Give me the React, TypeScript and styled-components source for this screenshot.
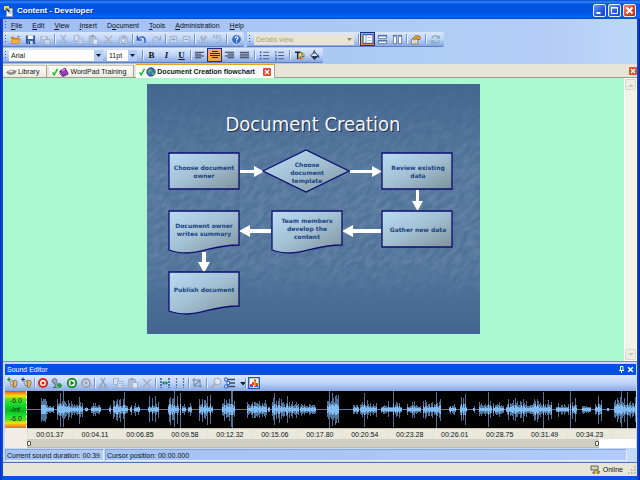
import React from "react";
import styled, { createGlobalStyle, css } from "styled-components";

const GlobalStyle = createGlobalStyle`
  * { box-sizing: border-box; }
  html, body { margin: 0; padding: 0; }
  body { font-family: "Liberation Sans", Arial, sans-serif; font-size: 7px; line-height: 10px; color: #0c1420; }
  button, select, input { font: inherit; color: inherit; margin: 0; padding: 0; }
  svg { display: block; flex: none; }
`;

/* ---------- window frame ---------- */

const Window = styled.div`
  display: flex;
  flex-direction: column;
  min-height: 100vh;
  padding: 0 3px 4px;
  background: linear-gradient(to right, #0a2fc0 0, #0b52e0 3px, #0b52e0 calc(100% - 3px), #0a1fa4 100%);
`;

const TitleBar = styled.header`
  display: flex;
  align-items: center;
  gap: 3px;
  height: 19px;
  margin: 0 -3px;
  padding: 2px 4px 0 3px;
  background: linear-gradient(#0a48c8 0, #2f86fa 2px, #0554e4 4px, #0055e2 12px, #0663fb 17px, #0348c8 19px);
`;

const TitleText = styled.h1`
  flex: 1;
  margin: 0;
  font-size: 8px;
  line-height: 12px;
  font-weight: bold;
  color: #fff;
  text-shadow: 1px 1px #0a2f90;
`;

const WindowButton = styled.button<{ $danger?: boolean }>`
  display: grid;
  place-items: center;
  width: 13px;
  height: 13px;
  margin-left: -1px;
  border: 1px solid #e4ecfd;
  border-radius: 2px;
  background: ${(p) =>
    p.$danger ? "linear-gradient(135deg, #f09078, #d8401c 60%, #c03010)" : "linear-gradient(135deg, #6f9cf8, #2258e0 60%, #1b48c8)"};
`;

const BarArea = styled.div`
  background: linear-gradient(to right, #9fbdf2, #b0cdf6 70%, #b5ccf7 86%, #bed8f8);
`;

const MenuBar = styled.nav`
  display: flex;
  align-items: center;
  height: 13px;
`;

const MenuItem = styled.button`
  height: 13px;
  margin-right: 4px;
  padding: 0 3px;
  border: 0;
  background: transparent;
`;

const ToolRow = styled.div`
  display: flex;
  gap: 3px;
  padding-bottom: 1px;
`;

const barFill = css`
  background: linear-gradient(#dbe8fd, #bfd4f8 50%, #86a8e2);
`;

const Toolbar = styled.div<{ $wide?: boolean }>`
  display: flex;
  align-items: center;
  height: ${(p) => (p.$wide ? 16 : 15)}px;
  padding-right: 1px;
  border-bottom: 1px solid #5f7fc0;
  border-radius: 0 2px 2px 0;
  ${barFill}
  ${(p) => p.$wide && css`border-radius: 0; border-bottom: 0;`}
`;

const Grip = styled.span`
  flex: none;
  width: 1px;
  height: 9px;
  margin: 0 2px;
  background: repeating-linear-gradient(#3a5590 0 1px, transparent 1px 3px);
`;

const Sep = styled.span<{ $gap?: number }>`
  flex: none;
  width: 1px;
  height: 10px;
  margin: 0 ${(p) => p.$gap ?? 1}px;
  background: #7594cf;
  box-shadow: 1px 0 #e8f0fd;
`;

const ToolButton = styled.button<{ $on?: boolean; $w?: number }>`
  display: grid;
  place-items: center;
  flex: none;
  width: ${(p) => p.$w ?? 15}px;
  height: 14px;
  border: ${(p) => (p.$on ? "1px solid #1b2f7c" : "0")};
  background: ${(p) => (p.$on ? "linear-gradient(#f8a860, #f4a04c)" : "transparent")};
  font-family: "Liberation Serif", serif;
  font-size: 9px;
  font-weight: bold;
`;

const SelectBox = styled.label<{ $w: number; $muted?: boolean; $m?: string }>`
  display: block;
  position: relative;
  width: ${(p) => p.$w}px;
  height: 11px;
  margin: ${(p) => p.$m ?? "0 4px 0 1px"};
  background: ${(p) => (p.$muted ? "#e6e4d4" : "#fff")};
  color: ${(p) => (p.$muted ? "#a8a692" : "#101010")};
  svg { position: absolute; right: 0; top: 0; pointer-events: none; }
`;

const Select = styled.select`
  appearance: none;
  display: block;
  width: 100%;
  height: 11px;
  padding: 0 2px;
  border: 0;
  background: transparent;
  line-height: 11px;
`;

/* ---------- tabs and document ---------- */

const TabStrip = styled.div`
  display: flex;
  align-items: flex-end;
  gap: 2px;
  height: 14px;
  background: #e7e6d6;
  border-bottom: 1px solid #9c9c8c;
`;

const Tab = styled.button<{ $active?: boolean }>`
  display: flex;
  align-items: center;
  gap: 1px;
  height: ${(p) => (p.$active ? 14 : 12)}px;
  margin-bottom: ${(p) => (p.$active ? -1 : 0)}px;
  padding: 0 ${(p) => (p.$active ? 3 : 7)}px 0 3px;
  border: 1px solid #a4a494;
  border-width: 1px 1px 0 0;
  border-top-color: ${(p) => (p.$active ? "#f0a020" : "#c8c8b8")};
  background: ${(p) => (p.$active ? "#fff" : "linear-gradient(#fdfdfa, #ecebdf)")};
  font-weight: ${(p) => (p.$active ? "bold" : "normal")};
  line-height: 10px;
`;

const CloseBox = styled.span`
  display: grid;
  place-items: center;
  width: 8px;
  height: 8px;
  margin-left: 7px;
  border: 0;
  border-radius: 1px;
  background: #e0502c;
`;

const StripClose = styled(CloseBox).attrs({ as: "button" })`
  align-self: center;
  margin-left: auto;
`;

const Workspace = styled.main`
  flex: 1;
  display: flex;
  border-bottom: 1px solid #8c8c80;
  background: #a9f8d0;
`;

const Canvas = styled.section`
  flex: 1;
  display: flex;
  justify-content: center;
  padding: 6px 0;
`;

const SlideArt = styled.svg`
  width: 333px;
  height: 250px;
  font-weight: bold;
  text-anchor: middle;
  fill: #1b4580;
`;

const ScrollTrack = styled.div`
  display: flex;
  flex-direction: column;
  justify-content: space-between;
  width: 13px;
  border: 1px solid #fff;
  background: #f3f2ea;
`;

const ScrollButton = styled.button`
  display: grid;
  place-items: center;
  height: 11px;
  border: 1px solid #d8d7ca;
  border-radius: 2px;
  background: #efeee4;
`;

/* ---------- sound editor ---------- */

const Panel = styled.section`
  padding: 2px 1px 1px 2px;
  background: #c5dafa;
  border-bottom: 1px solid #4f74b8;
`;

const PanelTitle = styled.h2`
  display: flex;
  align-items: center;
  height: 11px;
  margin: 0;
  padding: 0 1px 0 2px;
  background: #0650e0;
  color: #fff;
  font-size: 7px;
  font-weight: normal;
  span { flex: 1; }
`;

const PanelButton = styled.button`
  display: grid;
  place-items: center;
  width: 9px;
  height: 9px;
  border: 0;
  background: transparent;
`;

const Track = styled.div`
  display: flex;
  height: 37px;
  background: #000;
`;

const Meter = styled.div`
  flex: none;
  display: flex;
  flex-direction: column;
  justify-content: center;
  width: 22px;
  padding-right: 4px;
  border-right: 1px dashed #f4f4f4;
  text-align: right;
  line-height: 9px;
  color: #12300c;
  background: linear-gradient(#e83c10 0, #f09018 2px, #f8e010 5px, #60e020 8px, #20e030 12px, #08bc20 19px, #20e030 25px, #60e020 29px, #f8e010 32px, #f09018 35px, #e86850 37px);
`;

const WaveSvg = styled.svg`
  flex: 1;
  min-width: 0;
  height: 37px;
`;

const Ruler = styled.div`
  display: flex;
  height: 11px;
  padding-left: 22px;
  background: linear-gradient(to right, #f3ebe6 22px, #e9e8da 22px);
  text-align: center;
`;

const Tick = styled.span<{ $share: number }>`
  flex: ${(p) => p.$share} 1 0;
  border-top: 1px solid #c8c6b8;
  border-left: 1px solid #e4e2d6;
  line-height: 11px;
`;

const RangeRow = styled.div`
  display: flex;
  height: 9px;
  padding-left: 22px;
  background: linear-gradient(to right, #f3ebe6 22px, #fff 22px);
`;

const RangeTrack = styled.div`
  flex: 572 1 0;
  display: grid;
  background: #d0cec4;
  border-bottom: 1px solid #bab8ae;
`;

const RangeRest = styled.div`
  flex: 37 1 0;
`;

const Range = styled.input`
  grid-area: 1 / 1;
  appearance: none;
  width: 100%;
  height: 8px;
  background: transparent;
  pointer-events: none;
  &::-webkit-slider-thumb {
    appearance: none;
    pointer-events: auto;
    width: 4px;
    height: 5px;
    border: 1px solid #55534c;
    border-radius: 1px;
    background: #f4f3ec;
  }
`;

const SoundStatus = styled.div`
  display: flex;
  gap: 1px;
  height: 13px;
  padding: 1px 9px 0 0;
`;

const StatusCell = styled.div<{ $grow?: boolean }>`
  flex: ${(p) => (p.$grow ? "1" : "none")};
  padding: 0 3px 0 1px;
  border: 1px solid #8aa4d0;
  border-right-color: #e6effc;
  border-bottom-color: #e6effc;
  background: linear-gradient(to right, #a4c2f2, #b2cbf7);
  line-height: 11px;
`;

const StatusBar = styled.footer`
  display: flex;
  align-items: center;
  justify-content: flex-end;
  gap: 2px;
  height: 13px;
  background: #e7e6d6;
`;

/* ---------- icons ---------- */

const off = "#9fb0cc";
const glyphs: Record<string, React.ReactNode> = {
  open: <><path d="M1 3h3l1 1h5v2H1z" fill="#c8861c" /><path d="M1 10V4l1 2h9l-2 4.500z" fill="#fbc050" /><path d="M1 10.500h8l2.500-5h-8z" fill="#f7ae3c" stroke="#b8761c" strokeWidth=".6" /><path d="M8 3.500q1-2 2.500-.5" stroke="#356" fill="none" /></>,
  save: <><path d="M1 1.500h10v9.500H2l-1-1z" fill="#35589e" /><path d="M3 1.500h6v4H3z" fill="#f1f5fc" /><path d="M3.500 7.500h5V11h-5z" fill="#c9d6ee" /><path d="M4 8h1.500v3H4z" fill="#1c3268" /></>,
  saveAll: <><path d="M1 3h7v6H1z" fill="#b6c5de" stroke={off} /><path d="M3 3h3v2H3z" fill="#e2eafa" /><path d="M5 6h6v5H5z" fill="#c7d4ea" stroke={off} /></>,
  cut: <><path d="M3 1l5 7M8.500 1L4 8" stroke={off} strokeWidth="1.300" /><circle cx="3" cy="9.500" r="1.500" fill="none" stroke={off} /><circle cx="8" cy="9.500" r="1.500" fill="none" stroke={off} /></>,
  copy: <><path d="M1.500 1.500h5v6h-5z" fill="#d4e0f2" stroke={off} /><path d="M5.500 4.500h5v6h-5z" fill="#dde7f6" stroke={off} /><path d="M6.500 6.500h3M6.500 8.500h3" stroke={off} /></>,
  paste: <><path d="M1.500 2.500h7v8h-7z" fill="#b3bfd0" stroke={off} /><path d="M3.500 1h3v2h-3z" fill="#8b9cb8" /><path d="M5.500 5.500h5v5.500h-5z" fill="#e1e9f6" stroke={off} /></>,
  del: <path d="M2 2l8 8M10 2l-8 8" stroke="#a9a9b4" strokeWidth="1.300" />,
  photo: <><path d="M1.500 3.500h9v7h-9z" fill="#c2cee2" stroke={off} /><circle cx="6" cy="7" r="2.300" fill="#dbe5f4" stroke="#8d9fbe" /><path d="M4 1.500h5v2H4z" fill={off} /></>,
  undo: <path d="M1.500 2v4.500H6M2 6q3-4 6-2.500t1.500 6" fill="none" stroke="#2c5cb8" strokeWidth="1.500" />,
  redo: <path d="M10.500 2v4.500H6M10 6Q7 2 4 3.500t-1.500 6" fill="none" stroke={off} strokeWidth="1.300" />,
  plus: <><path d="M2.500 2.500h7v7h-7z" fill="#c8d8f3" stroke={off} /><path d="M4 6h4M6 4v4" stroke="#869cc0" /></>,
  minus: <><path d="M2.500 2.500h7v7h-7z" fill="#c8d8f3" stroke={off} /><path d="M4 6h4" stroke="#869cc0" /></>,
  find: <><path d="M3 2h2v3h2V2h2l2 8H7V7H5v3H1z" fill={off} /><path d="M3 5v4M9 5v4" stroke="#d8e3f5" /></>,
  spell: <><path d="M1 5l1.300-4L3.500 5M5 1v4h1.500V1zM10.500 1.500H8.500v3h2" fill="none" stroke={off} /><path d="M3.500 8l2 2.500L10 5.500" fill="none" stroke={off} strokeWidth="1.500" /></>,
  help: <><circle cx="6" cy="6" r="5.200" fill="#3568c4" stroke="#dfe9fb" strokeWidth=".8" /><path d="M4.500 4.700q.2-1.700 1.700-1.700 1.700.2 1.300 1.700L6.200 6.100v1M6.200 8.200v1.300" stroke="#fff" strokeWidth="1.200" fill="none" /></>,
  viewA: <><path d="M1 1.500h10v9H1z" fill="#fff" stroke="#4066a8" strokeWidth="1.300" /><path d="M4 2v8" stroke="#789acc" /><path d="M5.500 4.500h4M5.500 7.500h4" stroke="#a8c0e4" /></>,
  viewB: <><path d="M1.500 1.500h9v3.500h-9zM1.500 7h9v3.500h-9z" fill="#fbfcff" stroke="#66799e" /><path d="M1 2h10M1 7.500h10" stroke="#4a6ba4" strokeWidth="1.300" /></>,
  viewC: <><path d="M1.500 1.500H5v9H1.500zM7 1.500h3.500v9H7z" fill="#fbfcff" stroke="#66799e" /><path d="M1 2h4.500M6.500 2H11" stroke="#4a6ba4" strokeWidth="1.300" /></>,
  props: <><path d="M1.500 5.500h7V11h-7z" fill="#f5f4ea" stroke="#7d7868" /><path d="M3 5l3-3.500 5 1V6H8L7 4 5 6z" fill="#e9a72e" stroke="#6c5428" strokeWidth=".7" /><path d="M3 7.500h4M3 9.500h4" stroke="#9d9a88" strokeWidth=".7" /></>,
  refresh: <path d="M2 5q1-3.500 4.500-3T9.500 4.500M10 1.500v3H7M10 7q-1 3.500-4.500 3T2.500 7.500M2 10.500v-3h3" fill="none" stroke="#86b0b0" strokeWidth="1.400" />,
  left: <path d="M1 2.500h10M1 4.500h7M1 6.500h10M1 8.500h7" stroke="#222a3c" />,
  center: <path d="M3 2.500h6M1 4.500h10M1 6.500h10M3 8.500h6" stroke="#3a281c" />,
  right: <path d="M1 2.500h10M4 4.500h7M1 6.500h10M4 8.500h7" stroke="#222a3c" />,
  justify: <path d="M1 2.500h10M1 4.500h10M1 6.500h10M1 8.500h10" stroke="#222a3c" />,
  bullets: <><path d="M4.500 2.500H11M4.500 6H11M4.500 9.500H11" stroke="#4b5872" /><path d="M1 1.700h1.600v1.600H1zM1 5.200h1.600v1.600H1zM1 8.700h1.600v1.600H1z" fill="#23478e" /></>,
  numbers: <><path d="M4.500 2.500H11M4.500 6H11M4.500 9.500H11" stroke="#4b5872" /><path d="M2 1v3M1 5.500h1.500V7M1 8.500h1.500v2.500H1" fill="none" stroke="#23478e" strokeWidth=".8" /></>,
  palette: <><circle cx="7.500" cy="6.500" r="4" fill="#f0d47c" stroke="#8c7430" strokeWidth=".6" /><path d="M1 2.500h6M4 2.500V10" stroke="#1c2438" strokeWidth="1.500" /><circle cx="7" cy="8.500" r="1.300" fill="#d3342c" /><circle cx="9.500" cy="7" r="1.200" fill="#2f60d0" /><circle cx="8.500" cy="4.200" r="1.200" fill="#32a83c" /></>,
  bucket: <><path d="M2 6l4-4 4 4.500L6 10.500z" fill="#d9dde6" stroke="#1c2438" /><path d="M3 6.500h6.500L6 10z" fill="#20304f" /><path d="M5.500 4V.8h1" stroke="#1c2438" fill="none" /><path d="M9 5q3 1 2 4.500L9.500 7z" fill="#2048a8" /></>,
  earPlus: <><path d="M1 2.500h4M3 .5v4" stroke="#138420" strokeWidth="1.200" /><path d="M4 6q1-3 3-2.500v6Q5 9 4 6z" fill="#e8d8b0" stroke="#746440" strokeWidth=".7" /><path d="M8 3.500q3.500-1 3 2.500T8.500 11L7.500 9z" fill="#ecbf70" stroke="#7c6030" strokeWidth=".8" /></>,
  earBlue: <><path d="M1 2.500h4M3 .5v4" stroke="#1538a8" strokeWidth="1.200" /><path d="M4 6q1-3 3-2.500v6Q5 9 4 6z" fill="#e8d8b0" stroke="#746440" strokeWidth=".7" /><path d="M8 3.500q3.500-1 3 2.500T8.500 11L7.500 9z" fill="#ecbf70" stroke="#7c6030" strokeWidth=".8" /></>,
  record: <><circle cx="6" cy="6" r="4" fill="#fff" stroke="#e02818" strokeWidth="2.200" /><circle cx="6" cy="6" r="1.500" fill="#d82010" /></>,
  mic: <><path d="M1 4a2.500 2.500 0 1 1 4.500 1.500l2 2-1.500 1L4 6.500A2.500 2.500 0 0 1 1 4z" fill="#9aa4b4" stroke="#4e5a70" strokeWidth=".7" /><path d="M2 10.500h4M4 7v3" stroke="#4e5a70" /><path d="M6 8.500h5M8.500 6v5" stroke="#1b9a28" strokeWidth="2" /></>,
  play: <><circle cx="6" cy="6" r="4.200" fill="#fff" stroke="#189426" strokeWidth="2" /><path d="M4.500 3.500L8.500 6l-4 2.500z" fill="#107c1c" /></>,
  stop: <><circle cx="6" cy="6" r="4" fill="#d6dde8" stroke="#9aa3b2" strokeWidth="2" /><path d="M4.500 4.500h3v3h-3z" fill="#9aa3b2" /></>,
  cutG: <><path d="M4 1l4 7M8 1L4 8" stroke="#8f99a8" strokeWidth="1.200" /><circle cx="3.500" cy="9.500" r="1.400" fill="none" stroke="#8f99a8" /><circle cx="8.500" cy="9.500" r="1.400" fill="none" stroke="#8f99a8" /></>,
  span: <><path d="M2 1v10M10 1v10" stroke="#1a3a9c" strokeWidth="1.300" strokeDasharray="2 1" /><path d="M3 6l2.300-2.300v4.600zM9 6L6.700 3.700v4.600z" fill="#118838" /><path d="M4 6h4" stroke="#118838" /></>,
  marks: <path d="M2.500 1v10M9.500 1v10" stroke="#65758c" strokeWidth="1.200" strokeDasharray="2 1" />,
  crop: <path d="M3 1v8h8M1 3h8v8M3 9l6-6" fill="none" stroke="#748ba6" strokeWidth="1.100" />,
  lens: <><circle cx="7.500" cy="4.500" r="3.300" fill="#dfe6ef" stroke="#a6aeb8" strokeWidth="1.100" /><path d="M5 7l-3.500 4" stroke="#a6aeb8" strokeWidth="1.800" /></>,
  levels: <><path d="M4 2.500h7M6 6h5M4 9.500h7" stroke="#3d4a60" strokeWidth="1.500" /><path d="M.8 1h2.500v3H.8zM3 4.500h2.500v3H3zM.8 8h2.500v3H.8z" fill="#fff" stroke="#2a5cc4" /></>,
  drop: <path d="M3 5h6L6 8.500z" fill="#142038" />,
  chart: <><path d="M.7.700h10.600v10.600H.7z" fill="#fff4d8" stroke="#2c50a8" strokeWidth="1.300" /><path d="M2 7h2V5h2V2.500h2V6h2v2H8v2H6V8H2z" fill="#e8481c" /><path d="M2 8h3v2H2zM8 8h2v2H8z" fill="#2d68cc" /><path d="M6 4h1.500v5H6z" fill="#f0b41c" /></>,
};

const Icon = ({ name, size = 12 }: { name: string; size?: number }) => (
  <svg width={size} height={size} viewBox="0 0 12 12" aria-hidden="true" fill="none">{glyphs[name]}</svg>
);

const Arrow = ({ muted }: { muted?: boolean }) => (
  <svg width="10" height="11" viewBox="0 0 10 11" aria-hidden="true">
    {!muted && <path d="M1 0h9v11H1z" fill="#b4cdf6" />}
    <path d="M3 4h5L5.500 7z" fill={muted ? "#8c8a7c" : "#101828"} />
  </svg>
);

const Cross = ({ size = 6 }: { size?: number }) => (
  <svg width={size} height={size} viewBox="0 0 6 6" aria-hidden="true">
    <path d="M1 1l4 4M5 1L1 5" stroke="#fff" strokeWidth="1.300" />
  </svg>
);

const Check = () => (
  <svg width="6" height="8" viewBox="0 0 6 8" aria-hidden="true">
    <path d="M.7 4.500l1.500 2.300L5.500.8" fill="none" stroke="#18c018" strokeWidth="1.500" />
  </svg>
);

type Tool = string | { sep: number } | { name: string; w?: number; on?: boolean };

const Tools = ({ items, size }: { items: Tool[]; size?: number }) => (
  <>
    {items.map((item, i) => {
      if (typeof item === "string") return <ToolButton key={i} aria-label={item}><Icon name={item} size={size} /></ToolButton>;
      if ("sep" in item) return <Sep key={i} $gap={item.sep} />;
      return <ToolButton key={i} aria-label={item.name} $w={item.w} $on={item.on}><Icon name={item.name} size={item.on ? 12 : size} /></ToolButton>;
    })}
  </>
);

const standardTools: Tool[] = ["open", "save", "saveAll", { sep: 1 }, "cut", "copy", "paste", "del", "photo", { sep: 1 }, "undo", "redo", { sep: 1 },
  { name: "plus", w: 13 }, { name: "minus", w: 13 }, { sep: 1 }, { name: "find", w: 14 }, { name: "spell", w: 14 }, { sep: 2 }, { name: "help", w: 14 }];

const soundTools: Tool[] = [{ name: "earPlus", w: 13 }, "earBlue", { sep: 1 }, { name: "record", w: 14 }, { name: "mic", w: 14 }, "play", { name: "stop", w: 14 }, { sep: 1 },
  { name: "cutG", w: 14 }, "copy", "paste", { name: "del", w: 14 }, { sep: 1 }, "span", "marks", { sep: 1 }, { name: "crop", w: 14 }, { sep: 2 },
  { name: "lens", w: 14 }, { name: "levels", w: 14 }, { name: "drop", w: 7 }, { sep: 1 }, { name: "chart", w: 14 }];

/* ---------- flowchart ---------- */

const docShape = (x: number, y: number, h: number) =>
  `M${x} ${y}h70v${h}c-26 0 -36 8 -52 8q-10 0 -18 -3z`;

type NodeSpec = { d: string; cx: number; y: number; lines: string[] };

const nodes: NodeSpec[] = [
  { d: "M22 69h70v36h-70z", cx: 57, y: 86, lines: ["Choose document", "owner"] },
  { d: "M116 87l43-21 43 21-43 21z", cx: 160, y: 83, lines: ["Choose", "document", "template"] },
  { d: "M235 69h70v36h-70z", cx: 271, y: 86, lines: ["Review existing", "data"] },
  { d: "M235 127h70v36h-70z", cx: 271, y: 148, lines: ["Gather new data"] },
  { d: docShape(125, 127, 34), cx: 160, y: 139, lines: ["Team members", "develop the", "content"] },
  { d: docShape(22, 127, 34), cx: 57, y: 144, lines: ["Document owner", "writes summary"] },
  { d: docShape(22, 188, 34), cx: 57, y: 208, lines: ["Publish document"] },
];

const arrows = [
  "M93 86h14v-4l10 5.500-10 5.500v-4H93z",
  "M203 86h22v-4l10 5.500-10 5.500v-4h-22z",
  "M269 106v11h-4l5.500 10 5.500-10h-4v-11z",
  "M234 145h-28v-4l-11 6 11 6v-4h28z",
  "M124 145h-21v-4l-11 6 11 6v-4h21z",
  "M55 168v10h-4l6 11 6-11h-4v-10z",
];

const Slide = () => (
  <SlideArt viewBox="0 0 333 250" role="img" aria-label="Document Creation flowchart">
    <defs>
      <linearGradient id="sky" x1="0" y1="0" x2="0" y2="1">
        <stop offset="0" stopColor="#44668f" />
        <stop offset=".35" stopColor="#52749b" />
        <stop offset=".75" stopColor="#50729a" />
        <stop offset="1" stopColor="#43658f" />
      </linearGradient>
      <linearGradient id="glass" x1="0" y1="0" x2="1" y2="1">
        <stop offset="0" stopColor="#b9dcf4" />
        <stop offset=".5" stopColor="#a3bfd3" />
        <stop offset="1" stopColor="#7d929b" />
      </linearGradient>
      <linearGradient id="fade" x1="0" y1="0" x2="0" y2="1">
        <stop offset=".05" stopColor="#fff" stopOpacity=".2" />
        <stop offset=".35" stopColor="#fff" />
        <stop offset=".7" stopColor="#fff" />
        <stop offset=".9" stopColor="#fff" stopOpacity="0" />
      </linearGradient>
      <mask id="band"><path d="M0 0h333v250H0z" fill="url(#fade)" /></mask>
      <filter id="stone" x="0" y="0" width="100%" height="100%">
        <feTurbulence type="fractalNoise" baseFrequency=".1 .22" numOctaves="3" seed="7" />
        <feColorMatrix values="0 0 0 0 .6  0 0 0 0 .7  0 0 0 0 .82  1.300 0 0 0 -.4" />
      </filter>
    </defs>
    <path d="M0 0h333v250H0z" fill="url(#sky)" />
    <g mask="url(#band)">
      <g transform="rotate(-40 166 125)" opacity=".26"><path d="M-60-100h450v450H-60z" filter="url(#stone)" /></g>
    </g>
    <g fontFamily="'DejaVu Sans Condensed', 'DejaVu Sans', sans-serif" fontSize="20" fontWeight="normal">
      <text x="167" y="48" fill="#1c2c44" aria-hidden="true">Document Creation</text>
      <text x="166" y="47" fill="#f4f6f8">Document Creation</text>
    </g>
    {arrows.map((d) => <path key={d} d={d} fill="#fff" />)}
    {nodes.map((n) => (
      <g key={n.d}>
        <path d={n.d} fill="url(#glass)" stroke="#0b1070" strokeWidth="1.300" />
        <text fontFamily="'DejaVu Sans', sans-serif" fontSize="6">
          {n.lines.map((line, i) => <tspan key={line} x={n.cx} y={n.y + i * 8}>{line}</tspan>)}
        </text>
      </g>
    ))}
  </SlideArt>
);

/* ---------- wave form: [start, end, body height, peak height] ---------- */

const bursts: number[][] = [
  [14, 19, 9, 19], [20, 26, 4, 6], [30, 36, 7, 15], [33, 33, 7, 17], [37, 43, 6, 10], [44, 55, 7, 13], [58, 60, 3, 5], [64, 73, 6, 13], [82, 83, 2, 15],
  [86, 100, 7, 12], [97, 97, 8, 19], [103, 104, 3, 10], [107, 112, 4, 8], [121, 131, 5, 11], [141, 151, 7, 14], [153, 153, 7, 19], [155, 158, 3, 6], [161, 164, 4, 9],
  [172, 185, 5, 13], [195, 207, 8, 15], [201, 202, 8, 19], [205, 205, 7, 18], [220, 239, 6, 11], [241, 242, 3, 4], [245, 271, 6, 14], [273, 288, 5, 9],
  [300, 311, 13, 19], [326, 331, 3, 4], [333, 341, 4, 8], [337, 337, 4, 17], [342, 349, 4, 8], [354, 374, 3, 7], [366, 366, 3, 17],
  [380, 393, 4, 10], [396, 413, 5, 10], [409, 409, 6, 18], [422, 428, 3, 5], [433, 439, 5, 15], [446, 447, 3, 4],
  [452, 464, 6, 9], [461, 461, 6, 17], [466, 476, 3, 6], [479, 505, 4, 9], [488, 488, 5, 11], [506, 524, 6, 10], [516, 516, 7, 19],
  [529, 535, 4, 7], [536, 541, 4, 11], [543, 543, 5, 18], [545, 549, 4, 10], [555, 563, 3, 5], [568, 574, 4, 16], [580, 581, 2, 3],
  [587, 608, 6, 13], [594, 594, 6, 17], [600, 600, 8, 18],
];

const noise = (n: number) => {
  const v = Math.sin(n * 12.9898) * 43758.5453;
  return v - Math.floor(v);
};

const waves = bursts.reduce(
  (acc, [start, end, body, peak]) => {
    for (let x = start; x <= end; x++) {
      const tall = end === start ? peak : Math.round(body * 0.4 + noise(x) * noise(x + 3) * (peak - body * 0.4) * 1.5);
      const low = Math.min(tall, 18);
      const up = Math.min(Math.round(tall * (0.8 + noise(x + 9) * 0.3)), 18);
      acc.outer += `M${x}.5 ${18 - up}V${19 + low}`;
      const core = Math.min(5, Math.max(1, Math.round(low * (0.2 + 0.3 * noise(x + 5)))));
      acc.inner += `M${x}.5 ${18 - core}V${19 + core}`;
    }
    return acc;
  },
  { outer: "", inner: "" },
);

const WaveForm = () => (
  <WaveSvg viewBox="0 0 609 37" preserveAspectRatio="none" role="img" aria-label="Sound wave">
    <path d="M0 18.500h609" stroke="#4d7fb4" />
    <path d={waves.outer} stroke="#4f7499" />
    <path d={waves.inner} stroke="#82bcf4" />
  </WaveSvg>
);

const times = ["00:01.37", "00:04.11", "00:06.85", "00:09.58", "00:12.32", "00:15.06", "00:17.80", "00:20.54", "00:23.28", "00:26.01", "00:28.75", "00:31.49", "00:34.23"];

/* Menu captions with the index of their underlined access key. */
const menus: [string, number][] = [["File", 0], ["Edit", 0], ["View", 0], ["Insert", 0], ["Document", 1], ["Tools", 0], ["Administration", 0], ["Help", 0]];

export default function App() {
  return (
    <>
      <GlobalStyle />
      <Window>
        <TitleBar>
          <svg width="11" height="12" viewBox="0 0 11 12" aria-hidden="true">
            <path d="M1 1h5v4H1z" fill="#f7d848" /><path d="M3.500 3.500h6v8h-6z" fill="#f4f6fa" stroke="#a09c70" strokeWidth=".7" /><path d="M2 3l4 5 1-3z" fill="#2b3c64" /><path d="M6 6h3M6 8h3" stroke="#88a" strokeWidth=".7" />
          </svg>
          <TitleText>Content - Developer</TitleText>
          <WindowButton aria-label="Minimize"><svg width="9" height="9" viewBox="0 0 9 9"><path d="M1.500 7h4" stroke="#fff" strokeWidth="2" /></svg></WindowButton>
          <WindowButton aria-label="Maximize"><svg width="9" height="9" viewBox="0 0 9 9"><path d="M1.500 1.500h6v6h-6zM1 2h7" stroke="#fff" fill="none" /></svg></WindowButton>
          <WindowButton aria-label="Close" $danger><Cross size={9} /></WindowButton>
        </TitleBar>

        <BarArea>
          <MenuBar>
            <Grip />
            {menus.map(([name, key]) => (
              <MenuItem key={name}>{name.slice(0, key)}<u>{name[key]}</u>{name.slice(key + 1)}</MenuItem>
            ))}
          </MenuBar>
          <ToolRow>
            <Toolbar role="toolbar" aria-label="Standard">
              <Grip />
              <Tools items={standardTools} size={11} />
            </Toolbar>
            <Toolbar role="toolbar" aria-label="View">
              <Grip />
              <SelectBox $w={100} $muted $m="0 3px 0 2px">
                <Select aria-label="View mode" defaultValue="Details view"><option>Details view</option></Select>
                <Arrow muted />
              </SelectBox>
              <Tools size={11} items={[{ sep: 1 }, { name: "viewA", on: true }, "viewB", "viewC", { sep: 1 }, "props", { sep: 2 }, "refresh"]} />
            </Toolbar>
          </ToolRow>
          <ToolRow>
            <Toolbar role="toolbar" aria-label="Formatting">
              <Grip />
              <SelectBox $w={94}>
                <Select aria-label="Font" defaultValue="Arial"><option>Arial</option></Select>
                <Arrow />
              </SelectBox>
              <SelectBox $w={30} $m="0 4px 0 0">
                <Select aria-label="Font size" defaultValue="11pt"><option>11pt</option></Select>
                <Arrow />
              </SelectBox>
              <Sep />
              <ToolButton aria-label="Bold">B</ToolButton>
              <ToolButton aria-label="Italic"><i>I</i></ToolButton>
              <ToolButton aria-label="Underline"><u>U</u></ToolButton>
              <Tools size={11} items={[{ sep: 1 }, "left", { name: "center", on: true }, "right", "justify", { sep: 2 }, "bullets", "numbers", { sep: 2 }, "palette", "bucket"]} />
            </Toolbar>
          </ToolRow>
        </BarArea>

        <TabStrip role="tablist">
          <Tab role="tab">
            <svg width="11" height="8" viewBox="0 0 11 8" aria-hidden="true"><path d="M0 4.500l4-2h7L9 6 4 7z" fill="#8c8c88" /><path d="M1 4l4-2 4 1-4 2z" fill="#eee" stroke="#555" strokeWidth=".5" /></svg>
            Library
          </Tab>
          <Tab role="tab">
            <Check />
            <svg width="10" height="10" viewBox="0 0 10 10" aria-hidden="true"><path d="M1 4l5-3 3 5-5 3z" fill="#a43cc0" stroke="#4c1468" strokeWidth=".8" /><path d="M1 4v3l3 2.500L9.500 7" fill="none" stroke="#4c1468" strokeWidth=".8" /><path d="M3 3.500l3-1.500" stroke="#f0d0f8" /></svg>
            WordPad Training
          </Tab>
          <Tab role="tab" aria-selected="true" $active>
            <Check />
            <svg width="10" height="10" viewBox="0 0 10 10" aria-hidden="true"><circle cx="5" cy="5" r="4.200" fill="#3c74c8" stroke="#1c3868" strokeWidth=".8" /><path d="M2 3l3-1 1 2-2 1-1 2zM6 5l3 1-2 3z" fill="#5cb860" /></svg>
            Document Creation flowchart
            <CloseBox><Cross /></CloseBox>
          </Tab>
          <StripClose aria-label="Close document"><Cross /></StripClose>
        </TabStrip>

        <Workspace>
          <Canvas><Slide /></Canvas>
          <ScrollTrack>
            <ScrollButton aria-label="Scroll up"><svg width="6" height="4" viewBox="0 0 6 4"><path d="M0 4l3-3 3 3z" fill="#c8c7ba" /></svg></ScrollButton>
            <ScrollButton aria-label="Scroll down"><svg width="6" height="4" viewBox="0 0 6 4"><path d="M0 0l3 3 3-3z" fill="#c8c7ba" /></svg></ScrollButton>
          </ScrollTrack>
        </Workspace>

        <Panel>
          <PanelTitle>
            <span>Sound Editor</span>
            <PanelButton aria-label="Pin"><svg width="7" height="7" viewBox="0 0 7 7"><path d="M2 .5h3v3.500M2.500 .5V4M1 4.500h5M3.500 4.500V7" stroke="#fff" fill="none" /></svg></PanelButton>
            <PanelButton aria-label="Close sound editor"><Cross size={7} /></PanelButton>
          </PanelTitle>
          <Toolbar $wide role="toolbar" aria-label="Sound tools">
            <Tools items={soundTools} size={12} />
          </Toolbar>
          <Track>
            <Meter><span>-6.0</span><span>-Inf.</span><span>-6.0</span></Meter>
            <WaveForm />
          </Track>
          <Ruler>
            {times.map((t) => <Tick key={t} $share={45}>{t}</Tick>)}
            <Tick $share={24} />
          </Ruler>
          <RangeRow>
            <RangeTrack>
              <Range type="range" aria-label="View start" min={0} max={100} defaultValue={0} />
              <Range type="range" aria-label="View end" min={0} max={100} defaultValue={100} />
            </RangeTrack>
            <RangeRest />
          </RangeRow>
          <SoundStatus>
            <StatusCell>Current sound duration: 00:39</StatusCell>
            <StatusCell $grow>Cursor position: 00:00.000</StatusCell>
          </SoundStatus>
        </Panel>

        <StatusBar>
          <svg width="11" height="10" viewBox="0 0 11 10" aria-hidden="true"><path d="M1 1h7v4H1z" fill="#d8d4b8" stroke="#484838" strokeWidth=".8" /><path d="M2 8l3-3 5 1-1 3H4z" fill="#6c6a58" /><path d="M4.500 6h3v3h-3z" fill="#f0c030" /></svg>
          <span>Online</span>
          <svg width="12" height="11" viewBox="0 0 12 11" aria-hidden="true"><path d="M9 3h1.500M9 6h1.500M9 9h1.500M6 6h1.500M6 9h1.500M3 9h1.500" stroke="#a8a794" strokeWidth="1.500" /></svg>
        </StatusBar>
      </Window>
    </>
  );
}
